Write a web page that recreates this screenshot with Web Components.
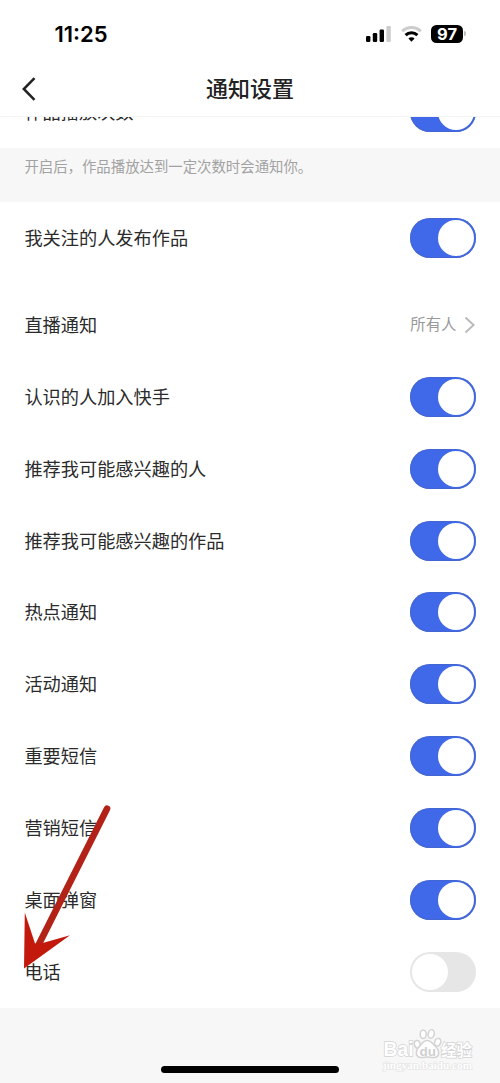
<!DOCTYPE html>
<html lang="zh-CN">
<head>
<meta charset="utf-8">
<title>通知设置</title>
<style>
  body {
    margin: 0;
    background: #fff;
    font-family: "Inter", "Noto Sans CJK SC", sans-serif;
    color: #2b2b2b;
  }
</style>
</head>
<body>

<settings-screen>
  <status-bar slot="top" time="11:25" battery="97"></status-bar>
  <nav-header slot="top">通知设置</nav-header>

  <setting-row class="cut">作品播放次数<toggle-switch slot="end" on></toggle-switch></setting-row>
  <group-note>开启后，作品播放达到一定次数时会通知你。</group-note>
  <setting-row class="last">我关注的人发布作品<toggle-switch slot="end" on></toggle-switch></setting-row>
  <setting-row>直播通知<value-link slot="end">所有人</value-link></setting-row>
  <setting-row>认识的人加入快手<toggle-switch slot="end" on></toggle-switch></setting-row>
  <setting-row>推荐我可能感兴趣的人<toggle-switch slot="end" on></toggle-switch></setting-row>
  <setting-row>推荐我可能感兴趣的作品<toggle-switch slot="end" on></toggle-switch></setting-row>
  <setting-row>热点通知<toggle-switch slot="end" on></toggle-switch></setting-row>
  <setting-row>活动通知<toggle-switch slot="end" on></toggle-switch></setting-row>
  <setting-row>重要短信<toggle-switch slot="end" on></toggle-switch></setting-row>
  <setting-row>营销短信<toggle-switch slot="end" on></toggle-switch></setting-row>
  <setting-row>桌面弹窗<toggle-switch slot="end" on></toggle-switch></setting-row>
  <setting-row>电话<toggle-switch slot="end"></toggle-switch></setting-row>

  <home-bar slot="bottom"></home-bar>
  <red-arrow slot="over"></red-arrow>
  <water-mark slot="over"></water-mark>
</settings-screen>

<script>
class SettingsScreen extends HTMLElement {
    constructor() {
        super();
        this.attachShadow({ mode: 'open' }).innerHTML = `
<style>
  :host {
    display: flex;
    flex-direction: column;
    position: relative;
    width: 500px;
    height: 1083px;
    overflow: hidden;
    background: #f7f7f7;
  }
  main {
    overflow: hidden;
    background: #fff;
    flex: none;
  }
  /* the list is scrolled, its first row is half under the header */
  ::slotted(.cut) { margin-top: -41px; }
  ::slotted(.last) { margin-bottom: 15.4px; }
</style>
<slot name="top"></slot>
<main><slot></slot></main>
<slot name="bottom"></slot>
<slot name="over"></slot>`;
    }
}

class StatusBar extends HTMLElement {
    connectedCallback() {
        this.attachShadow({ mode: 'open' }).innerHTML = `
<style>
  :host {
    display: flex;
    justify-content: space-between;
    align-items: center;
    box-sizing: border-box;
    flex: none;
    height: 60px;
    padding: 7px 34px 0 54.5px;
    background: #fff;
    color: #000;
  }
  .time { font-size: 22px; font-weight: 600; }
  .icons { display: flex; align-items: center; }
  .signal { margin-right: 10px; }
  .wifi { margin-right: 9px; }
  .battery {
    width: 32px;
    height: 18px;
    border-radius: 5.5px;
    background: #000;
    color: #fff;
    font-size: 16.5px;
    font-weight: 700;
    line-height: 18px;
    text-align: center;
  }
  .nub {
    width: 2px;
    height: 5px;
    margin-left: 1px;
    border-radius: 0 2px 2px 0;
    background: #bbb;
  }
</style>
<span class="time">${this.getAttribute('time')}</span>
<div class="icons">
  <svg class="signal" width="25" height="16" viewBox="0 0 25 16">
    <rect x="0" y="10" width="4.4" height="6" rx="1.2"/>
    <rect x="6.8" y="7" width="4.4" height="9" rx="1.2"/>
    <rect x="13.6" y="3.6" width="4.4" height="12.4" rx="1.2"/>
    <rect x="20.4" y="0" width="4.4" height="16" rx="1.2" fill="#ccc"/>
  </svg>
  <svg class="wifi" width="21" height="16" viewBox="0 0 21 16" fill="none" stroke-width="3">
    <path d="M1.2 5.3a13.3 13.3 0 0 1 18.6 0" stroke="#ccc"/>
    <path d="M4.6 9.1a8.4 8.4 0 0 1 11.8 0" stroke="#000"/>
    <path d="M10.5 15.8 7.4 12.6a4.4 4.4 0 0 1 6.2 0z" fill="#000"/>
  </svg>
  <div class="battery">${this.getAttribute('battery')}</div>
  <div class="nub"></div>
</div>`;
    }
}

class NavHeader extends HTMLElement {
    constructor() {
        super();
        this.attachShadow({ mode: 'open' }).innerHTML = `
<style>
  :host {
    display: grid;
    grid-template-columns: 60px 1fr 60px;
    align-items: center;
    box-sizing: border-box;
    flex: none;
    height: 57px;
    padding-top: 1px;
    border-bottom: 1px solid #f3f3f3;
    background: #fff;
  }
  svg { margin-left: 21px; }
  h1 {
    margin: 0;
    font-size: 22px;
    font-weight: 500;
    line-height: 30px;
    text-align: center;
    color: #222;
  }
</style>
<svg width="16" height="24" viewBox="0 0 16 24" fill="none" stroke="#222" stroke-width="2.5">
  <path d="M13.5 1.2 2.8 12l10.7 10.8"/>
</svg>
<h1><slot></slot></h1>`;
    }
}

class SettingRow extends HTMLElement {
    constructor() {
        super();
        this.attachShadow({ mode: 'open' }).innerHTML = `
<style>
  :host {
    display: flex;
    justify-content: space-between;
    align-items: center;
    height: 71.87px;
    padding: 0 24px 0 24.4px;
    font-size: 18.2px;
    line-height: 26px;
    background: #fff;
  }
</style>
<span><slot></slot></span>
<slot name="end"></slot>`;
    }
}

class GroupNote extends HTMLElement {
    constructor() {
        super();
        this.attachShadow({ mode: 'open' }).innerHTML = `
<style>
  :host {
    display: block;
    box-sizing: border-box;
    height: 54px;
    padding: 9px 24px 0 24.4px;
    font-size: 14.4px;
    line-height: 20px;
    color: #a2a2a2;
    background: #f7f7f7;
  }
</style>
<slot></slot>`;
    }
}

class ToggleSwitch extends HTMLElement {
    constructor() {
        super();
        this.attachShadow({ mode: 'open' }).innerHTML = `
<style>
  :host {
    display: flex;
    align-items: center;
    box-sizing: border-box;
    width: 66px;
    height: 40px;
    padding: 0 2px;
    border-radius: 20px;
    background: #e6e6e6;
  }
  :host([on]) {
    justify-content: flex-end;
    background: #4069ea;
    box-shadow: inset 0 0 1.5px 0.5px #4863bd;
  }
  i {
    width: 36px;
    height: 36px;
    border-radius: 50%;
    background: #fff;
  }
</style>
<i></i>`;
    }
}

class ValueLink extends HTMLElement {
    constructor() {
        super();
        this.attachShadow({ mode: 'open' }).innerHTML = `
<style>
  :host {
    display: flex;
    align-items: center;
    gap: 7.5px;
    font-size: 15.4px;
    color: #999;
  }
</style>
<span><slot></slot></span>
<svg width="12" height="18" viewBox="0 0 12 18" fill="none" stroke="#b9b9b9" stroke-width="1.9">
  <path d="M1.5 1.5 9.6 9l-8.1 7.5"/>
</svg>`;
    }
}

class HomeBar extends HTMLElement {
    constructor() {
        super();
        this.attachShadow({ mode: 'open' }).innerHTML = `
<style>
  :host {
    display: flex;
    flex: 1;
    justify-content: center;
    align-items: flex-end;
    padding-bottom: 10px;
  }
  div {
    width: 178px;
    height: 7px;
    border-radius: 4px;
    background: #000;
  }
</style>
<div></div>`;
    }
}

class RedArrow extends HTMLElement {
    constructor() {
        super();
        this.attachShadow({ mode: 'open' }).innerHTML = `
<style>
  :host {
    position: absolute;
    left: 20px;
    top: 800px;
  }
  svg { display: block; }
</style>
<svg width="95" height="175" viewBox="0 0 95 175">
  <path d="M87 8.700 17 148" stroke="#b32217" stroke-width="6.600" stroke-linecap="round"/>
  <path d="M4.800 112.500 15 143.500 21.800 143.300 50 135.300 4 168.500z" fill="#c3190d"/>
</svg>`;
    }
}

class WaterMark extends HTMLElement {
    constructor() {
        super();
        this.attachShadow({ mode: 'open' }).innerHTML = `
<style>
  :host {
    position: absolute;
    left: 381px;
    top: 1027px;
  }
  svg { display: block; }
  text { paint-order: stroke; }
</style>
<svg width="96" height="46" viewBox="0 0 96 46" fill="#fff" stroke="#d3d3d3" stroke-width="1.5">
  <text x="2.500" y="29" font-family="Liberation Sans, sans-serif" font-weight="700" font-size="20.500" textLength="30" lengthAdjust="spacingAndGlyphs">Bai</text>
  <ellipse cx="36.3" cy="17.2" rx="2.9" ry="3.8" transform="rotate(-15 36.3 17.2)"/>
  <ellipse cx="42.2" cy="7.2" rx="3" ry="4.3"/>
  <ellipse cx="50.2" cy="6.9" rx="3" ry="4.3" transform="rotate(12 50.2 6.9)"/>
  <ellipse cx="56.7" cy="15.2" rx="3" ry="3.9" transform="rotate(20 56.7 15.2)"/>
  <path d="M46 13.5c-4 0-5.5 4-8.5 7-3 3-3.5 9.5 2 10 3 .3 4.500-.5 7-.5s4 .8 7 .5c5.500-.6 5-7 2-10-3.500-3.500-5.500-7-9.500-7z"/>
  <text x="38.500" y="28.500" font-family="Liberation Sans, sans-serif" font-weight="700" font-size="13.500" fill="#cfcfcf" stroke="none">du</text>
  <text x="60" y="29" font-family="Noto Sans CJK SC, sans-serif" font-weight="700" font-size="15.500">经验</text>
  <text x="2" y="42" font-family="Liberation Serif, serif" font-weight="700" font-size="10.500" textLength="89" lengthAdjust="spacingAndGlyphs" stroke="#e2e2e2" stroke-width="1.200">jingyan.baidu.com</text>
</svg>`;
    }
}

customElements.define('settings-screen', SettingsScreen);
customElements.define('status-bar', StatusBar);
customElements.define('nav-header', NavHeader);
customElements.define('setting-row', SettingRow);
customElements.define('group-note', GroupNote);
customElements.define('toggle-switch', ToggleSwitch);
customElements.define('value-link', ValueLink);
customElements.define('home-bar', HomeBar);
customElements.define('red-arrow', RedArrow);
customElements.define('water-mark', WaterMark);
</script>
</body>
</html>
